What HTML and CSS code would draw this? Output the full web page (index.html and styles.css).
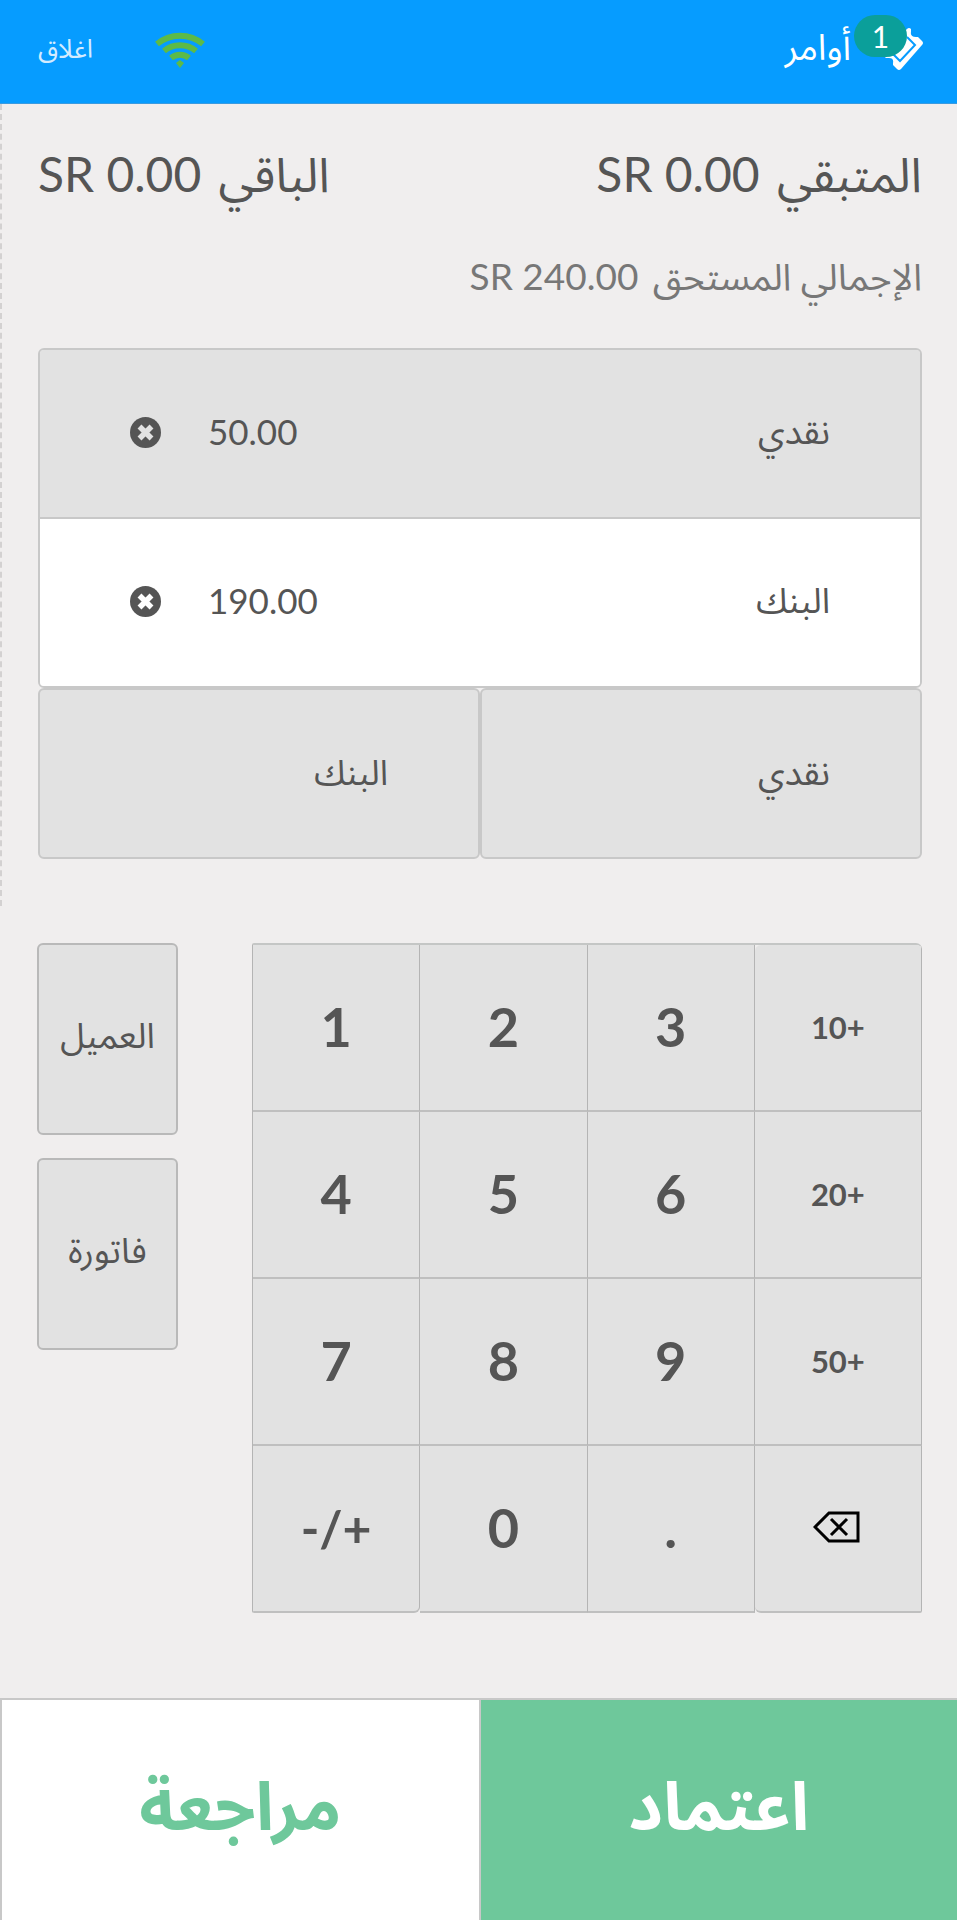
FILE: index.html
```html
<!DOCTYPE html>
<html lang="ar" dir="rtl">
<head>
    <meta charset="UTF-8">
    <meta name="viewport" content="width=device-width, initial-scale=1.0">
    <title>نقطة البيع</title>
    <link rel="stylesheet" href="styles.css">
</head>
<body>
    <header class="topbar">
        <button type="button" class="orders">
            <span class="orders-icon">
                <svg width="44" height="44" viewBox="0 0 44 44">
                    <path d="M28 2q2-2 4 0v3q-1 5 5 5h2l4 4q2 2 0 4L22 42q-2 2-4 0l-4-4v-2q1-5-4-5H7l-5-5z" fill="#fff"/>
                    <path d="M28 10l8 8-15 16-8-8" fill="none" stroke="#069cff" stroke-width="2"/>
                </svg>
                <span class="badge">1</span>
            </span>
            <span>أوامر</span>
        </button>
        <div class="topbar-left">
            <svg class="wifi" width="50" height="38" viewBox="0 0 50 38" fill="none" stroke="#5dba47" stroke-width="6">
                <path d="M2 13a36 36 0 0 1 46 0"/>
                <path d="M9 20a25 25 0 0 1 32 0"/>
                <path d="M16 27a14 14 0 0 1 18 0"/>
                <path d="M21 32l4-3 4 3-4 5z" fill="#5dba47" stroke="none"/>
            </svg>
            <button type="button" class="close">اغلاق</button>
        </div>
    </header>

    <main>
        <section class="payment">
            <div class="totals">
                <div><span>المتبقي</span> <span class="value" dir="ltr">SR 0.00</span></div>
                <div><span>الباقي</span> <span class="value" dir="ltr">SR 0.00</span></div>
            </div>
            <div class="due"><span>الإجمالي المستحق</span> <span class="value" dir="ltr">SR 240.00</span></div>

            <div class="lines">
                <table>
                    <tr>
                        <td class="name">نقدي</td>
                        <td class="amount">50.00</td>
                        <td class="remove">
                            <button type="button" aria-label="حذف">
                                <svg width="31" height="31" viewBox="0 0 31 31">
                                    <circle cx="15.5" cy="15.5" r="15.5" fill="#555"/>
                                    <path d="M9.5 9.5l12 12M21.5 9.5l-12 12" stroke="#e2e2e2" stroke-width="5.5"/>
                                </svg>
                            </button>
                        </td>
                    </tr>
                    <tr class="selected">
                        <td class="name">البنك</td>
                        <td class="amount">190.00</td>
                        <td class="remove">
                            <button type="button" aria-label="حذف">
                                <svg width="31" height="31" viewBox="0 0 31 31">
                                    <circle cx="15.5" cy="15.5" r="15.5" fill="#555"/>
                                    <path d="M9.5 9.5l12 12M21.5 9.5l-12 12" stroke="#fff" stroke-width="5.5"/>
                                </svg>
                            </button>
                        </td>
                    </tr>
                </table>
            </div>

            <div class="methods">
                <button type="button">نقدي</button>
                <button type="button">البنك</button>
            </div>
        </section>

        <section class="controls">
            <div class="keypad" dir="ltr">
                <button type="button">1</button>
                <button type="button">2</button>
                <button type="button">3</button>
                <button type="button" class="quick first">10+</button>
                <button type="button">4</button>
                <button type="button">5</button>
                <button type="button">6</button>
                <button type="button" class="quick">20+</button>
                <button type="button">7</button>
                <button type="button">8</button>
                <button type="button">9</button>
                <button type="button" class="quick">50+</button>
                <button type="button" class="sign">-/+</button>
                <button type="button">0</button>
                <button type="button">.</button>
                <button type="button" class="erase" aria-label="مسح">
                    <svg width="50" height="34" viewBox="0 0 50 34" fill="none" stroke="#000" stroke-width="3">
                        <path d="M16 2h29v28H16L2 16z"/>
                        <path d="M18 8l16 16M34 8L18 24"/>
                    </svg>
                </button>
            </div>
            <div class="side">
                <button type="button">العميل</button>
                <button type="button">فاتورة</button>
            </div>
        </section>
    </main>

    <footer class="actions">
        <button type="button" class="validate">اعتماد</button>
        <button type="button" class="review">مراجعة</button>
    </footer>
</body>
</html>
```

FILE: styles.css
```css
* {
    box-sizing: border-box;
}

body {
    margin: 0;
    min-height: 100vh;
    display: flex;
    flex-direction: column;
    font-family: Lato, "Noto Sans Arabic", "DejaVu Sans", sans-serif;
    font-size: 35px;
    color: #555;
    background-color: #f0eeee;
}

button {
    font: inherit;
    color: inherit;
    margin: 0;
    padding: 0;
    border: none;
    background: none;
    cursor: pointer;
}

svg {
    display: block;
}

/* top bar */
.topbar {
    display: flex;
    justify-content: space-between;
    align-items: center;
    height: 104px;
    padding: 0 34px 4px 38px;
    background-color: #069cff;
    border-bottom: 1px solid #3a9be0;
}

.orders {
    display: flex;
    align-items: center;
    gap: 28px;
    padding-bottom: 2px;
    font-size: 36px;
    color: #fff;
}

.orders-icon {
    position: relative;
}

.badge {
    position: absolute;
    top: -12px;
    right: 16px;
    width: 53px;
    height: 42px;
    line-height: 42px;
    border-radius: 21px;
    font-size: 30px;
    background-color: #0b9f9a;
}

.topbar-left {
    display: flex;
    align-items: center;
    gap: 62px;
}

.close {
    font-size: 26px;
    color: #d3ebff;
}

/* totals and payment lines */
.payment {
    padding: 40px 35px 47px 36px;
    border-left: 2px dashed #d3d1d1;
}

.totals {
    display: flex;
    justify-content: space-between;
    font-size: 48px;
    line-height: 60px;
}

.due {
    margin: 48px 0 48px;
    font-size: 37px;
    line-height: 48px;
    color: #777;
}

.value {
    margin-right: 5px;
}

.lines {
    border: 2px solid #c8c8c8;
    border-radius: 6px;
    overflow: hidden;
}

.lines table {
    width: 100%;
    border-collapse: collapse;
    background-color: #e2e2e2;
}

.lines td {
    height: 168px;
    padding: 0 0 2px;
}

.lines .selected td {
    background-color: #fff;
    border-top: 2px solid #c8c8c8;
}

.lines .name {
    padding-right: 90px;
}

.lines .amount {
    width: 200px;
    padding-bottom: 6px;
    text-align: left;
}

.lines .remove {
    width: 168px;
    padding-left: 90px;
}

.lines .remove button {
    display: block;
    margin-right: auto;
}

.methods {
    display: grid;
    grid-template-columns: 1fr 1fr;
}

.methods button {
    height: 171px;
    padding-right: 90px;
    text-align: right;
    background-color: #e2e2e2;
    border: 2px solid #c8c8c8;
    border-radius: 6px;
}

/* keypad */
.controls {
    display: flex;
    justify-content: space-between;
    align-items: flex-start;
    gap: 74px;
    padding: 37px 35px 85px 37px;
}

.keypad {
    flex: 1;
    display: grid;
    grid-template-columns: repeat(4, 1fr);
    border-top: 2px solid #c4c6c5;
    border-left: 1px solid #b4b4b4;
    border-radius: 2px 6px 2px 2px;
    overflow: hidden;
}

.keypad button {
    height: 167px;
    padding-bottom: 2px;
    font-size: 54px;
    font-weight: bold;
    background-color: #e2e2e2;
    border-right: 1px solid #b4b4b4;
    border-bottom: 2px solid #bfbfbf;
}

.keypad .quick {
    font-size: 31px;
}

.keypad .first {
    border-top-left-radius: 6px;
}

.keypad .sign {
    font-size: 50px;
    border-bottom-right-radius: 6px;
}

.keypad .erase {
    border-bottom-left-radius: 6px;
}

.keypad .erase svg {
    margin: 0 auto;
}

.side {
    display: flex;
    flex-direction: column;
    gap: 23px;
    width: 141px;
}

.side button {
    height: 192px;
    padding-bottom: 4px;
    background-color: #e2e2e2;
    border: 2px solid #b9b9b9;
    border-radius: 6px;
}

/* bottom actions */
.actions {
    flex: 1;
    display: grid;
    grid-template-columns: 1fr 1fr;
    min-height: 222px;
}

.actions button {
    padding-bottom: 4px;
    font-size: 67px;
    font-weight: bold;
    border-top: 2px solid #c8c8c8;
    border-left: 2px solid #c8c8c8;
}

.actions .validate {
    color: #fff;
    background-color: #6ec89b;
}

.actions .review {
    color: #6ec89b;
    background-color: #fff;
}
```
